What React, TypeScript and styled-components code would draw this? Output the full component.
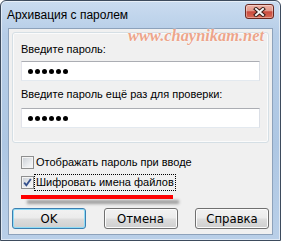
import React from "react";
import styled, { createGlobalStyle } from "styled-components";

const GlobalStyle = createGlobalStyle`
  html, body {
    margin: 0;
    padding: 0;
    background: #ffffff;
  }
  body {
    width: 281px;
    height: 241px;
    overflow: hidden;
    font-family: "Liberation Sans", Arial, sans-serif;
  }
`;

const Window = styled.div`
  position: relative;
  box-sizing: border-box;
  width: 281px;
  height: 241px;
  display: flex;
  flex-direction: column;
  padding: 0 7px 5px;
  border: 1px solid #3d4b5d;
  border-radius: 6px 6px 0 0;
  background: linear-gradient(
    180deg,
    #cadcf0 0%,
    #b6cde7 14%,
    #aec7e3 60%,
    #b9cfe8 100%
  );
  box-shadow: inset 0 0 0 1px rgba(255, 255, 255, 0.55);
`;

const TitleBar = styled.div`
  height: 27px;
  margin: 0 -7px;
  padding: 0 6px;
  display: flex;
  align-items: flex-start;
  justify-content: space-between;
`;

const Title = styled.div`
  padding-top: 7px;
  font-size: 12px;
  line-height: 14px;
  color: #000;
`;

const CloseButton = styled.div`
  box-sizing: border-box;
  width: 29px;
  height: 15px;
  margin-top: 3px;
  border: 1px solid #6a2820;
  border-radius: 3px;
  background: linear-gradient(
    180deg,
    #eeb1a5 0%,
    #e2988a 45%,
    #c94a3e 52%,
    #d86a55 100%
  );
  box-shadow: inset 0 0 0 1px rgba(255, 255, 255, 0.35);
  display: flex;
  align-items: center;
  justify-content: center;
`;

const Watermark = styled.div`
  position: absolute;
  left: 127px;
  top: 26px;
  font-family: "Liberation Serif", "Times New Roman", serif;
  font-style: italic;
  font-weight: bold;
  font-size: 16.4px;
  line-height: 17px;
  color: #eca58b;
  white-space: nowrap;
  text-shadow: 0 0 1px #fff, 0 0 2px #fff;
  pointer-events: none;
`;

const Client = styled.div`
  flex: 1;
  display: flex;
  flex-direction: column;
  padding: 3px;
  background: #f0f0f0;
  border: 1px solid #8da2bb;
`;

const GroupBox = styled.div`
  display: flex;
  flex-direction: column;
  padding: 10px 8px 14px;
  border: 1px solid #d5dfe5;
  border-radius: 3px;
  box-shadow: inset 0 0 0 1px #fbfbfb;
`;

const FieldLabel = styled.div<{ $top: number }>`
  margin-top: ${(p) => p.$top}px;
  font-size: 11px;
  line-height: 13px;
  color: #000;
  white-space: nowrap;
`;

const PasswordField = styled.div<{ $top: number }>`
  box-sizing: border-box;
  height: 20px;
  margin-top: ${(p) => p.$top}px;
  padding-left: 6px;
  display: flex;
  align-items: center;
  gap: 2px;
  background: #fff;
  border: 1px solid;
  border-color: #abadb3 #dbdfe6 #e3e9ef #e2e3ea;
`;

const Dot = styled.span`
  width: 5px;
  height: 5px;
  border-radius: 50%;
  background: #000;
`;

const CheckRow = styled.div<{ $top: number }>`
  height: 17px;
  margin: ${(p) => p.$top}px 0 0 9px;
  display: flex;
  align-items: center;
`;

const CheckBox = styled.div`
  box-sizing: border-box;
  width: 13px;
  height: 13px;
  border: 1px solid #8e8f8f;
  background: linear-gradient(135deg, #c9ced4 0%, #eef0f2 70%, #f7f7f7 100%);
  box-shadow: inset 0 0 0 1px #f4f4f4;
  display: flex;
  align-items: center;
  justify-content: center;
`;

const CheckText = styled.span<{ $focused?: boolean }>`
  padding: 1px 1px;
  border: 1px dotted ${(p) => (p.$focused ? "#000" : "transparent")};
  font-size: 11px;
  line-height: 13px;
  color: #000;
  white-space: nowrap;
`;

const RedMark = styled.div`
  width: 152px;
  height: 4px;
  margin: 4px 0 0 9px;
  background: #ff0000;
  box-shadow: 6px 5px 3px rgba(60, 60, 60, 0.45);
`;

const ButtonRow = styled.div`
  margin-top: 9px;
  display: flex;
  justify-content: space-between;
`;

const DialogButton = styled.div<{ $default?: boolean }>`
  box-sizing: border-box;
  width: 74px;
  height: 21px;
  display: flex;
  align-items: center;
  justify-content: center;
  border: 1px solid ${(p) => (p.$default ? "#3c7fb1" : "#707070")};
  border-radius: 3px;
  background: linear-gradient(
    180deg,
    #f2f2f2 0%,
    #ebebeb 48%,
    #dddddd 52%,
    #cfcfcf 100%
  );
  box-shadow: inset 0 0 0 1px ${(p) => (p.$default ? "#8fdcf6" : "#fcfcfc")};
  font-family: "Liberation Sans Narrow", "DejaVu Sans Condensed", "Liberation Sans", sans-serif;
  font-size: 13px;
  line-height: 15px;
  color: #000;
`;

const Dots = ({ count }: { count: number }) => (
  <>
    {Array.from({ length: count }).map((_, i) => (
      <Dot key={i} />
    ))}
  </>
);

export default function App() {
  return (
    <>
      <GlobalStyle />
      <Window>
        <TitleBar>
          <Title>Архивация с паролем</Title>
          <CloseButton>
            <svg width="13" height="10" viewBox="0 0 13 10">
              <path
                d="M3 2 L10 8 M10 2 L3 8"
                stroke="#3a1c17"
                strokeWidth="4"
                strokeLinecap="square"
                fill="none"
              />
              <path
                d="M3 2 L10 8 M10 2 L3 8"
                stroke="#f4f4f4"
                strokeWidth="2"
                strokeLinecap="square"
                fill="none"
              />
            </svg>
          </CloseButton>
        </TitleBar>
        <Client>
          <GroupBox>
            <FieldLabel $top={0}>Введите пароль:</FieldLabel>
            <PasswordField $top={5}>
              <Dots count={6} />
            </PasswordField>
            <FieldLabel $top={7}>Введите пароль ещё раз для проверки:</FieldLabel>
            <PasswordField $top={7}>
              <Dots count={6} />
            </PasswordField>
          </GroupBox>
          <CheckRow $top={11}>
            <CheckBox />
            <CheckText>Отображать пароль при вводе</CheckText>
          </CheckRow>
          <CheckRow $top={3}>
            <CheckBox>
              <svg width="9" height="9" viewBox="0 0 9 9">
                <path
                  d="M1.2 4.6 L3.4 7.3 L7.8 1"
                  stroke="#34508c"
                  strokeWidth="1.8"
                  fill="none"
                />
              </svg>
            </CheckBox>
            <CheckText $focused>Шифровать имена файлов</CheckText>
          </CheckRow>
          <RedMark />
          <ButtonRow>
            <DialogButton $default>OK</DialogButton>
            <DialogButton>Отмена</DialogButton>
            <DialogButton>Справка</DialogButton>
          </ButtonRow>
        </Client>
        <Watermark>www.chaynikam.net</Watermark>
      </Window>
    </>
  );
}
